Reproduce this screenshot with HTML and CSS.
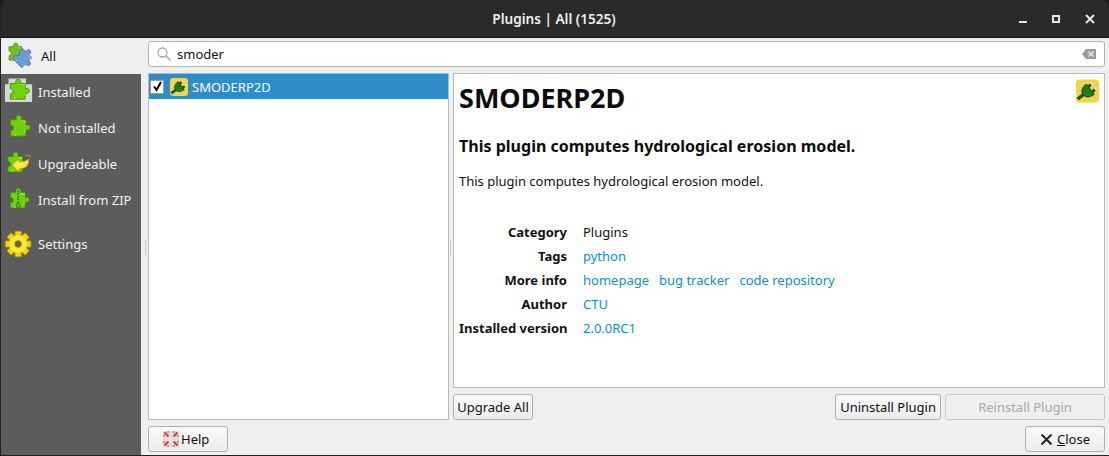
FILE: index.html
```html
<!DOCTYPE html>
<html lang="en">
<head>
  <meta charset="UTF-8" />
  <title>Plugins | All (1525)</title>
  <link rel="stylesheet" href="styles.css">
</head>
<body>

<svg class="defs" width="0" height="0">
  <defs>
    <g id="puzzle">
      <path d="M3 6H9V5.500a2.800 2.800 0 1 1 5 0V6H19V11.500H19.500a2.800 2.800 0 1 1 0 5H19V23H3V17.500a2.800 2.800 0 0 0 0-6Z"/>
      <path d="M14.500 7.200H18V11M18 17V20M7 21.800H11" fill="none" stroke="#e6f7c8" stroke-width=".8" stroke-dasharray="2 1.500"/>
    </g>
    <g id="plug" transform="rotate(-38 12 12)">
      <path d="M-1 10.800h9.500v3H-1z" fill="#14600c" stroke="#0a2c06" stroke-width=".5"/>
      <path d="M6 12.300C6 8 10 5.500 15.500 5.500V19C10 19 6 16.500 6 12.300z" fill="#1d7f12" stroke="#0a2c06" stroke-width=".8"/>
      <path d="M15.500 7.500h3.500v2.800h-3.500zM15.500 14.300h3.500v2.800h-3.500z" fill="#0f4a0a"/>
      <path d="M19 8h1.800v1.800H19zM19 14.800h1.800v1.800H19z" fill="#fff"/>
    </g>
  </defs>
</svg>

<div class="window">
  <header class="titlebar">
    <span class="title">Plugins | All (1525)</span>
    <div class="winbtns">
      <span class="win-min"></span>
      <span class="win-max"></span>
      <svg class="win-close" width="10" height="10" viewBox="0 0 10 10"><path d="M1 1l8 8M9 1l-8 8" stroke="#e8e8e8" stroke-width="2"/></svg>
    </div>
  </header>

  <div class="main">
    <nav class="sidebar">
      <div class="nav-item active">
        <svg class="nav-icon" viewBox="0 0 32 32">
          <use href="#puzzle" transform="translate(2 0) scale(.9)" fill="#6fc31c" stroke="#3f7f10"/>
          <use href="#puzzle" transform="translate(20.500 18.500) rotate(45) scale(.95) translate(-12 -14)" fill="#6d9bd1" stroke="#3e6ca5"/>
        </svg>
        <span>All</span>
      </div>
      <div class="nav-item installed">
        <svg class="nav-icon" viewBox="0 0 32 32">
          <path d="M0 7H4V.5H24V7H31V27.500H0Z" fill="#d3d7cf"/>
          <use href="#puzzle" transform="translate(3 0) scale(1.05)" fill="#6fd00c" stroke="#4a8a0a"/>
        </svg>
        <span>Installed</span>
      </div>
      <div class="nav-item">
        <svg class="nav-icon" viewBox="0 0 32 32">
          <use href="#puzzle" transform="translate(3 0) scale(1.1)" fill="#6fd00c" stroke="#4a8a0a"/>
        </svg>
        <span>Not installed</span>
      </div>
      <div class="nav-item">
        <svg class="nav-icon" viewBox="0 0 32 32">
          <use href="#puzzle" transform="translate(0 1) scale(1.05)" fill="#6fd00c" stroke="#4a8a0a"/>
          <path d="M8 17l8-7v3.500c4 0 8-.5 11-3 1 7-4 11-11 11V25z" fill="#fce94f" stroke="#c4a000"/>
          <path d="M23 6h3c2 0 3 1.500 3 3" fill="none" stroke="#a68a00" stroke-width="1.500"/>
        </svg>
        <span>Upgradeable</span>
      </div>
      <div class="nav-item">
        <svg class="nav-icon" viewBox="0 0 32 32">
          <use href="#puzzle" transform="translate(3 1) scale(1.05)" fill="#6fd00c" stroke="#4a8a0a"/>
          <path d="M15 5v15" stroke="#2f5a0c" stroke-width="1.500" stroke-dasharray="2 1"/>
          <circle cx="15" cy="22" r="2.200" fill="none" stroke="#2f5a0c"/>
        </svg>
        <span>Install from ZIP</span>
      </div>
      <div class="nav-item settings">
        <svg class="nav-icon" viewBox="0 0 32 32">
          <g transform="translate(-1 0)">
            <g fill="#f2d60a" stroke="#c4a800">
              <rect x="12.500" y="1.500" width="7" height="29" rx="1"/>
              <rect x="12.500" y="1.500" width="7" height="29" rx="1" transform="rotate(45 16 16)"/>
              <rect x="12.500" y="1.500" width="7" height="29" rx="1" transform="rotate(90 16 16)"/>
              <rect x="12.500" y="1.500" width="7" height="29" rx="1" transform="rotate(135 16 16)"/>
            </g>
            <circle cx="16" cy="16" r="10" fill="#fbe93c"/>
            <circle cx="16" cy="16" r="4" fill="#6a6430" stroke="#c4a800"/>
          </g>
        </svg>
        <span>Settings</span>
      </div>
    </nav>

    <div class="content">
      <div class="search">
        <svg class="search-icon" width="16" height="16" viewBox="0 0 16 16"><circle cx="6.500" cy="6.500" r="4.500" fill="none" stroke="#a8a8a8" stroke-width="1.300"/><path d="M10 10l4.500 4.500" stroke="#a8a8a8" stroke-width="1.600"/></svg>
        <span class="search-text">smoder</span>
        <svg class="search-clear" width="14" height="10" viewBox="0 0 14 10"><path d="M4 0h10v10H4L0 5z" fill="#9a9a9a"/><path d="M6.500 2.500l5 5M11.500 2.500l-5 5" stroke="#eee" stroke-width="1.300"/></svg>
      </div>

      <div class="panes">
        <div class="list">
          <div class="list-row">
            <span class="check">
              <svg width="11" height="11" viewBox="0 0 11 11"><path d="M2 5.500l2.500 3.500L9 1" fill="none" stroke="#000" stroke-width="2"/></svg>
            </span>
            <svg class="plugin-icon" viewBox="0 0 24 24"><rect width="24" height="24" rx="4" fill="#efd44e"/><use href="#plug"/></svg>
            <span>SMODERP2D</span>
          </div>
        </div>

        <div class="right">
          <div class="details">
            <svg class="details-icon" viewBox="0 0 24 24"><rect width="24" height="24" rx="4" fill="#efd44e"/><use href="#plug"/></svg>
            <h1>SMODERP2D</h1>
            <h2>This plugin computes hydrological erosion model.</h2>
            <p>This plugin computes hydrological erosion model.</p>
            <div class="meta">
              <b>Category</b><span>Plugins</span>
              <b>Tags</b><span><a>python</a></span>
              <b>More info</b><span class="links"><a>homepage</a><a>bug tracker</a><a>code repository</a></span>
              <b>Author</b><span><a>CTU</a></span>
              <b>Installed version</b><span><a>2.0.0RC1</a></span>
            </div>
          </div>
          <div class="actions">
            <button class="btn btn-upgrade">Upgrade All</button>
            <span class="spacer"></span>
            <button class="btn">Uninstall Plugin</button>
            <button class="btn btn-wide" disabled>Reinstall Plugin</button>
          </div>
        </div>
      </div>

      <div class="footer">
        <button class="btn btn-help">
          <svg width="16" height="16" viewBox="0 0 16 16">
            <rect x="1" y="1" width="14" height="14" fill="#e2e2e2" stroke="#c9c9c9"/>
            <path d="M1.500 1.500l4 4M14.500 1.500l-4 4M1.500 14.500l4-4M14.500 14.500l-4-4" stroke="#e8363f" stroke-width="2.200"/>
            <path d="M4 1h2M1 4v2M10 1h2M15 4v2M1 10v2M4 15h2M15 10v2M10 15h2" stroke="#e8363f"/>
          </svg>
          Help
        </button>
        <span class="spacer"></span>
        <button class="btn btn-close">
          <svg width="13" height="11" viewBox="0 0 13 11"><path d="M1.500.5l10 10M11.500.5l-10 10" stroke="#222" stroke-width="2"/></svg>
          <span><u>C</u>lose</span>
        </button>
      </div>
    </div>

    <span class="grip grip-side"></span>
    <span class="grip grip-list"></span>
  </div>
</div>

</body>
</html>
```

FILE: styles.css
```css
html, body { margin: 0; padding: 0; height: 100%; background: #1b1b1b; overflow: hidden; }
body { font-family: "Noto Sans", sans-serif; font-size: 13px; color: #111; }
.defs { position: absolute; }

.window { display: flex; flex-direction: column; width: 1109px; height: 456px; background: #1f1f1f; border-radius: 8px 8px 0 0; box-sizing: border-box; overflow: hidden; border-left: 1px solid #222; border-bottom: 1px solid #222; }

.titlebar { display: flex; align-items: center; justify-content: center; height: 38px; flex: none; background: #2a2a2a; border-bottom: 1px solid #111; box-sizing: border-box; position: relative; padding-right: 2px; }
.title { color: #f0f0f0; font-weight: 600; font-size: 13.6px; }
.winbtns { position: absolute; right: 0; top: 0; height: 37px; display: flex; align-items: center; }
.win-min { width: 8px; height: 2px; background: #e8e8e8; position: absolute; right: 82px; top: 21px; }
.win-max { border: 2px solid #e8e8e8; position: absolute; right: 49px; top: 15px; width: 4px; height: 4px; }
.win-close { position: absolute; right: 14px; top: 14px; }

.main { flex: 1; display: flex; min-height: 0; background: #efefef; position: relative; }

.sidebar { width: 140px; flex: none; background: #5c5c5c; color: #f2f2f2; padding: 0; }
.nav-item { display: flex; align-items: center; gap: 5px; height: 36px; padding-left: 4px; }
.nav-item.active { background: #efefef; color: #111; gap: 8px; }
.nav-item.settings { margin-top: 8px; }
.nav-icon { width: 28px; height: 28px; flex: none; overflow: visible; }

.content { flex: 1; display: flex; flex-direction: column; padding: 3px 4px 3px 7px; min-width: 0; }

.search { display: flex; align-items: center; height: 26px; box-sizing: border-box; background: #fff; border: 1px solid #b4b4b4; border-radius: 3px; padding: 0 8px 0 7px; flex: none; }
.search-icon { flex: none; margin-right: 5px; }
.search-text { flex: 1; }

.panes { flex: 1; display: flex; gap: 4px; margin-top: 6px; min-height: 0; }
.list { width: 301px; flex: none; background: #fff; border: 1px solid #b9b9b9; box-sizing: border-box; }
.list-row { display: flex; align-items: center; height: 25px; background: #308cc6; color: #fff; padding-left: 1px; }
.check { display: flex; align-items: center; justify-content: center; width: 12px; height: 12px; background: #fff; border: 1px solid #999; margin-right: 6px; }
.plugin-icon { width: 18px; height: 18px; margin-right: 4px; }

.right { flex: 1; display: flex; flex-direction: column; min-width: 0; }
.details { flex: 1; background: #fff; border: 1px solid #b9b9b9; box-sizing: border-box; padding: 7px 5px; position: relative; }
.details-icon { position: absolute; top: 5px; right: 5px; width: 23px; height: 24px; }
.details h1 { font-size: 27px; line-height: 33px; font-weight: 700; margin: 0; color: #0c0c0c; }
.details h2 { font-size: 16.05px; line-height: 22px; font-weight: 700; margin: 21px 0 0; color: #0c0c0c; }
.details p { margin: 15px 0 0; line-height: 18px; }
.meta { display: grid; grid-template-columns: 108px auto; column-gap: 16px; grid-auto-rows: 24px; align-items: center; margin-top: 30px; }
.meta b { text-align: right; font-weight: 700; white-space: nowrap; }
.meta a { color: #0a8ed1; }
.links { display: flex; gap: 10px; }

.actions { display: flex; gap: 4px; height: 26px; margin-top: 6px; flex: none; }
.footer { display: flex; height: 26px; margin-top: 6px; flex: none; }
.spacer { flex: 1; }

.btn { font: inherit; color: #111; box-sizing: border-box; height: 26px; min-width: 80px; padding: 0 4px; background: linear-gradient(#f8f8f8, #ececec); border: 1px solid #b0b0b0; border-radius: 3px; display: inline-flex; align-items: center; justify-content: center; white-space: nowrap; }
.btn[disabled] { color: #a8a8a8; background: #efefef; border-color: #c8c8c8; }
.btn-upgrade { padding: 0; }
.btn-wide { width: 160px; }
.btn-help { justify-content: flex-start; padding-left: 14px; gap: 2px; }
.btn-close { gap: 4px; }

.grip { position: absolute; top: 202px; height: 15px; border-left: 1px dotted #a4a4a4; }
.grip-side { left: 144px; }
.grip-list { left: 449px; }
```
